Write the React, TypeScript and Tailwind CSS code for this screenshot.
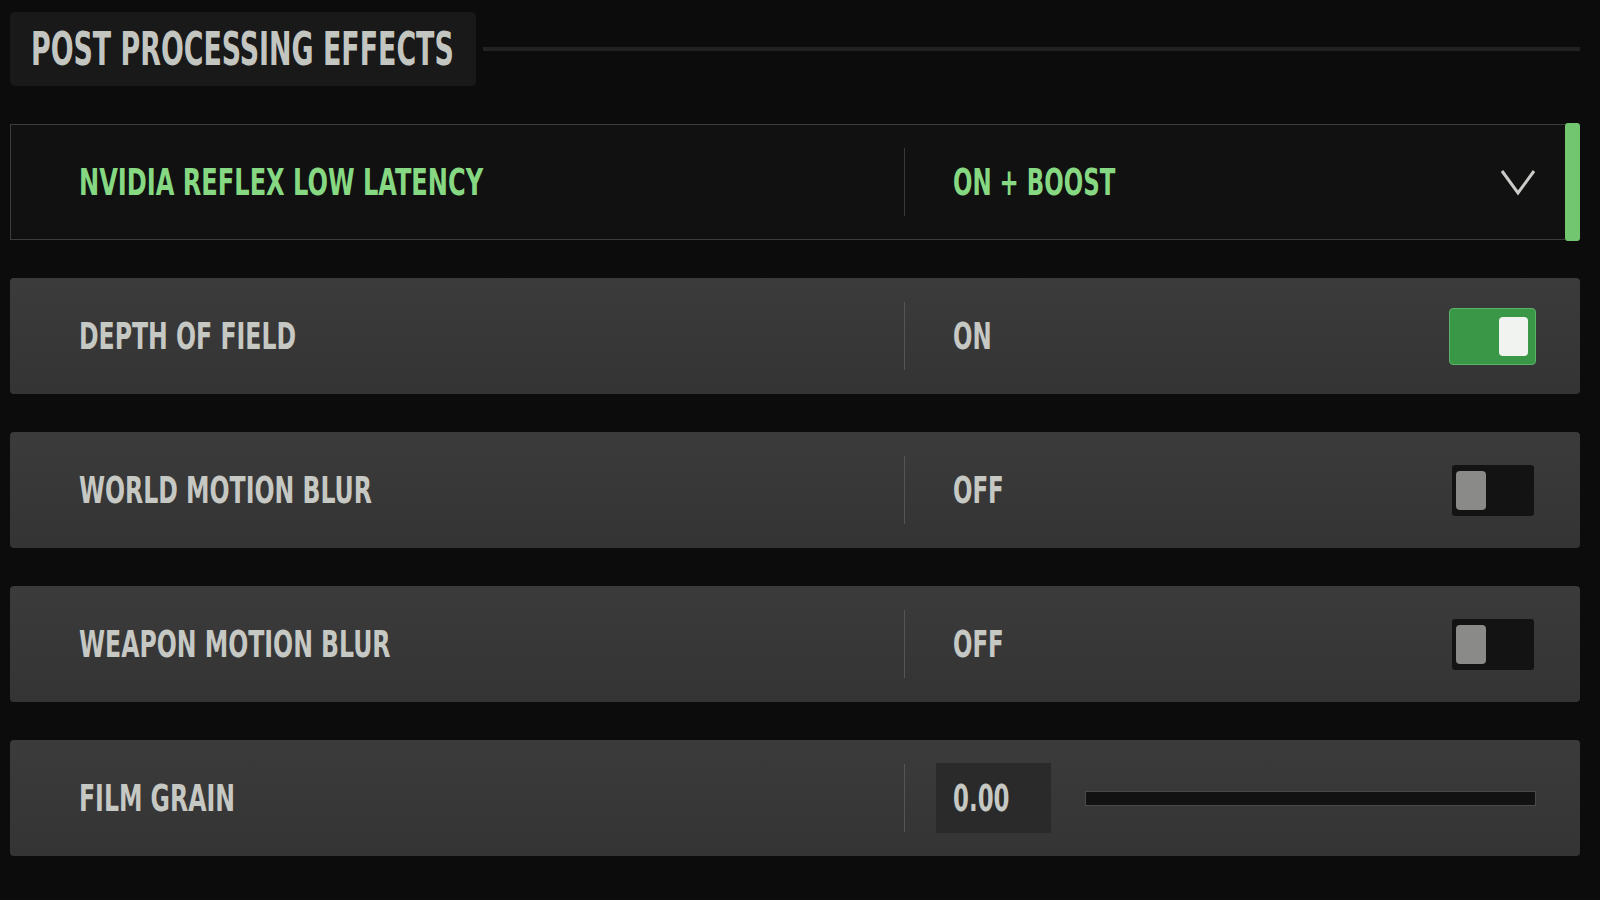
import React from "react";

const FONT = {
  fontFamily:
    '"DejaVu Sans Condensed", "Liberation Sans Narrow", "DejaVu Sans", sans-serif',
};

function Label({
  children,
  green,
  value,
  wide,
}: {
  children: React.ReactNode;
  green?: boolean;
  value?: boolean;
  wide?: boolean;
}) {
  return (
    <span
      className={`text-[38px] leading-none font-bold origin-left inline-block whitespace-nowrap ${
        value ? "scale-x-[0.67]" : wide ? "scale-x-[0.705]" : "scale-x-[0.69]"
      } ${green ? "text-[#86d982]" : "text-[#c6c8c4]"}`}
      style={FONT}
    >
      {children}
    </span>
  );
}

function Divider({ dark }: { dark?: boolean }) {
  return <div className={`w-px h-[68px] ${dark ? "bg-[#3a3a3a]" : "bg-[#555555]"}`} />;
}

function ToggleOn() {
  return (
    <div className="w-[87px] h-[57px] rounded-[4px] bg-[#3a9747] border border-[#5cb266] flex items-center justify-end pr-[7px]">
      <div className="w-[29px] h-[39px] rounded-[4px] bg-[#f1f3f0]" />
    </div>
  );
}

function ToggleOff() {
  return (
    <div className="w-[82px] h-[51px] rounded-[3px] bg-[#131313] flex items-center pl-[4px]">
      <div className="w-[30px] h-[39px] rounded-[4px] bg-[#8a8b89]" />
    </div>
  );
}

function Row({
  label,
  value,
  control,
}: {
  label: string;
  value: React.ReactNode;
  control: React.ReactNode;
}) {
  return (
    <div className="h-[116px] rounded-[4px] bg-gradient-to-b from-[#3b3b3b] to-[#343434] flex items-center">
      <div className="w-[894px] pl-[69px] flex items-center">
        <Label>{label}</Label>
      </div>
      <Divider />
      <div className="flex-1 flex items-center pr-[44px]">
        {value}
        {control}
      </div>
    </div>
  );
}

export default function App() {
  return (
    <div className="w-[1600px] h-[900px] bg-[#0c0c0c] overflow-hidden pl-[10px] pr-[20px] pt-[12px]">
      {/* Header */}
      <div className="flex items-center h-[74px]">
        <div className="w-[466px] h-[74px] rounded-[5px] bg-[#191919] pl-[21px] flex items-center">
          <span
            className="text-[46px] leading-none font-bold text-[#c3c5c1] origin-left inline-block scale-x-[0.649] whitespace-nowrap"
            style={FONT}
          >
            POST PROCESSING EFFECTS
          </span>
        </div>
        <div className="flex-1 ml-[7px] h-[4px] bg-[#222222]" />
      </div>

      <div className="mt-[38px] flex flex-col gap-[38px]">
        {/* Row 1 - dropdown selected */}
        <div className="h-[116px] flex">
          <div className="flex-1 border border-r-0 border-[#3c3c3c] bg-[#111111] flex items-center">
            <div className="w-[893px] pl-[68px] flex items-center">
              <Label green wide>
                NVIDIA REFLEX LOW LATENCY
              </Label>
            </div>
            <Divider dark />
            <div className="flex-1 flex items-center pl-[48px] pr-[29px]">
              <div className="flex-1">
                <Label green value>
                  ON + BOOST
                </Label>
              </div>
              <svg width="36" height="28" viewBox="0 0 36 28" fill="none">
                <path d="M2 3 L18 25 L34 3" stroke="#c9cbc7" strokeWidth="3" strokeLinejoin="miter" />
              </svg>
            </div>
          </div>
          <div className="w-[15px] -my-px rounded-[3px] bg-[#72c66f]" />
        </div>

        <Row
          label="DEPTH OF FIELD"
          value={
            <div className="flex-1 pl-[48px]">
              <Label value>ON</Label>
            </div>
          }
          control={<ToggleOn />}
        />
        <Row
          label="WORLD MOTION BLUR"
          value={
            <div className="flex-1 pl-[48px]">
              <Label value>OFF</Label>
            </div>
          }
          control={
            <div className="mr-[2px]">
              <ToggleOff />
            </div>
          }
        />
        <Row
          label="WEAPON MOTION BLUR"
          value={
            <div className="flex-1 pl-[48px]">
              <Label value>OFF</Label>
            </div>
          }
          control={
            <div className="mr-[2px]">
              <ToggleOff />
            </div>
          }
        />
        <Row
          label="FILM GRAIN"
          value={
            <div className="flex-1 flex items-center pl-[31px]">
              <div className="w-[115px] h-[70px] bg-[#2a2a2a] flex items-center pl-[17px]">
                <Label value>0.00</Label>
              </div>
              <div className="flex-1 ml-[34px] h-[15px] bg-[#121212] border border-[#4a4a4a]" />
            </div>
          }
          control={null}
        />
      </div>
    </div>
  );
}
